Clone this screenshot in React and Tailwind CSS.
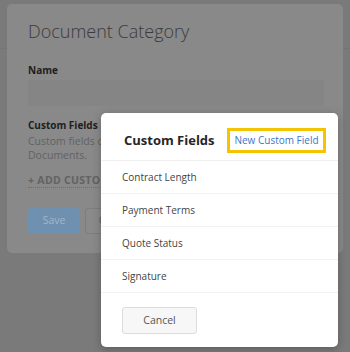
import React from 'react';

const fields = ['Contract Length', 'Payment Terms', 'Quote Status', 'Signature'];

export default function App() {
  return (
    <div
      className="relative w-[350px] h-[352px] overflow-hidden bg-[#7a7a7a]"
      style={{ fontFamily: '"Open Sans", "Liberation Sans", sans-serif' }}
    >
      {/* page header line behind the card */}
      <div className="absolute left-0 top-0 w-full h-[49px] border-b border-[#747474]" />

      {/* dimmed form card */}
      <div className="relative ml-[7px] mt-[4px] w-[336px] h-[249px] rounded-[5px] bg-[#898989] pl-[21px] pr-[20px] pt-[14px]">
        <h1 className="text-[18px] font-light leading-[26px] text-[#3b3b3b]">Document Category</h1>

        <div className="mt-[19px] text-[10px] font-bold leading-[14px] text-[#1e1e1e]">Name</div>
        <div className="mt-[3px] h-[26px] w-[296px] rounded-[2px] bg-[#848584]" />

        <div className="mt-[12px] text-[10px] font-bold leading-[14px] text-[#1e1e1e]">Custom Fields</div>
        <p className="mt-[2px] text-[10.5px] leading-[14px] text-[#626262]">
          Custom fields can be added to
          <br />
          Documents.
        </p>
        <div className="mt-[11px] inline-block border-b border-dotted border-[#6e6e6e] text-[10.5px] font-bold leading-[14px] tracking-[0.3px] text-[#626262]">
          + ADD CUSTOM FIELD
        </div>

        <div className="mt-[18px] flex gap-[5px]">
          <div className="flex h-[26px] w-[52px] items-center justify-center rounded-[3px] bg-[#7090b0] text-[10.5px] text-[#a3b6c9]">
            Save
          </div>
          <div className="flex h-[26px] w-[60px] items-center justify-center rounded-[3px] border border-[#7d7d7d] bg-[#8a8a8a] text-[10.5px] text-[#5a5a5a]">
            Cancel
          </div>
        </div>
      </div>

      {/* modal */}
      <div className="absolute left-[101px] top-[113px] w-[237px] h-[234px] rounded-[5px] bg-white shadow-[0_2px_8px_rgba(0,0,0,0.25)] flex flex-col">
        <div className="flex h-[48px] items-center justify-between border-b border-[#f0f0f0] pt-[8px] pl-[23px] pr-[12px]">
          <span className="text-[13px] font-bold text-[#262626]">Custom Fields</span>
          <span className="flex h-[25px] w-[99px] items-center justify-center border-[3px] border-[#f5c400] text-[10px] text-[#3a78c9]">
            New Custom Field
          </span>
        </div>
        {fields.map((f) => (
          <div
            key={f}
            className="flex h-[33px] items-center border-b border-[#f2f2f2] pl-[21px] text-[10px] text-[#444]"
          >
            {f}
          </div>
        ))}
        <div className="pl-[21px] pt-[14px]">
          <div className="flex h-[27px] w-[75px] items-center justify-center rounded-[3px] border border-[#dcdcdc] bg-[#f7f7f7] text-[10.5px] text-[#555]">
            Cancel
          </div>
        </div>
      </div>
    </div>
  );
}
